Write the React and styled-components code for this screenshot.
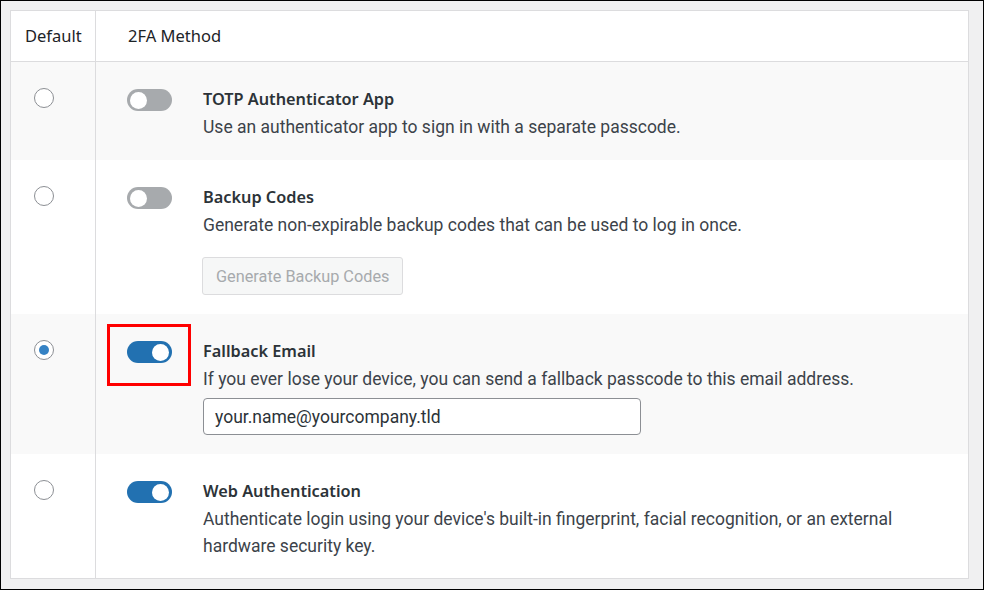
import React from "react";
import styled, { createGlobalStyle } from "styled-components";

const Global = createGlobalStyle`
  html, body { margin: 0; padding: 0; }
  body { background: #f0f0f1; }
  * { box-sizing: border-box; }
`;

const Frame = styled.div`
  width: 984px;
  height: 590px;
  border: 1px solid #000;
  background: #f0f0f1;
  padding: 9px 14px 11px 9px;
`;

const Table = styled.div`
  border: 1px solid #dcdcde;
  background: #fff;
  display: grid;
  grid-template-columns: 85px 1fr;
  height: 569px;
  align-content: start;
`;

const HeadCell = styled.div`
  height: 51px;
  display: flex;
  align-items: center;
  padding-left: ${(p) => p.$pl}px;
  padding-bottom: 1px;
  font-family: "Noto Sans", "Open Sans", sans-serif;
  font-size: 16.5px;
  color: #1d2327;
  border-bottom: 1px solid #dcdcde;
  border-right: ${(p) => (p.$divider ? "1px solid #dcdcde" : "none")};
`;

const Cell = styled.div`
  background: ${(p) => (p.$alt ? "#f9f9f9" : "#fff")};
  height: ${(p) => p.$h}px;
  border-right: ${(p) => (p.$divider ? "1px solid #dcdcde" : "none")};
`;

const RadioCell = styled(Cell)`
  display: flex;
  justify-content: flex-start;
  padding-top: 26px;
  padding-left: 23px;
`;

const Radio = styled.span`
  width: 20px;
  height: 20px;
  border-radius: 50%;
  border: 1px solid #8c8f94;
  background: #fff;
  display: flex;
  align-items: center;
  justify-content: center;
  &::after {
    content: "";
    width: 10px;
    height: 10px;
    border-radius: 50%;
    background: ${(p) => (p.$checked ? "#3582c4" : "transparent")};
  }
`;

const MethodCell = styled(Cell)`
  display: flex;
  padding-left: 31px;
  padding-top: 27px;
`;

const ToggleWrap = styled.div`
  width: 76px;
  flex: none;
  position: relative;
`;

const Highlight = styled.div`
  position: absolute;
  left: -20px;
  top: -17px;
  width: 84px;
  height: 62px;
  border: 3px solid #ff0000;
`;

const Toggle = styled.span`
  display: flex;
  align-items: center;
  width: 45px;
  height: 22px;
  border-radius: 11px;
  background: ${(p) => (p.$on ? "#2271b1" : "#a7aaad")};
  padding: 0 3px;
  justify-content: ${(p) => (p.$on ? "flex-end" : "flex-start")};
  &::after {
    content: "";
    width: 17px;
    height: 17px;
    border-radius: 50%;
    background: #fff;
  }
`;

const Body = styled.div`
  display: flex;
  flex-direction: column;
  align-items: flex-start;
`;

const Title = styled.div`
  font-family: "Noto Sans", "Open Sans", sans-serif;
  font-weight: 600;
  font-size: 16.3px;
  line-height: 22px;
  color: #2c3338;
  margin-top: -1px;
`;

const Desc = styled.div`
  font-family: Roboto, "Liberation Sans", sans-serif;
  font-size: 17.5px;
  line-height: 27px;
  color: #3c434a;
  margin-top: 4px;
  max-width: 700px;
`;

const Button = styled.button`
  margin-top: 18px;
  margin-left: -1px;
  height: 38px;
  padding: 0 13px;
  border: 1px solid #dcdcde;
  border-radius: 3px;
  background: #f6f7f7;
  color: #a7aaad;
  font-family: Roboto, "Liberation Sans", sans-serif;
  font-size: 16.3px;
`;

const Input = styled.div`
  margin-top: 5px;
  width: 438px;
  height: 37px;
  border: 1px solid #8c8f94;
  border-radius: 4px;
  background: #fff;
  display: flex;
  align-items: center;
  padding-left: 11px;
  font-family: Roboto, "Liberation Sans", sans-serif;
  font-size: 17.5px;
  color: #2c3338;
`;

const rows = [
  {
    h: 98,
    alt: true,
    on: false,
    title: "TOTP Authenticator App",
    desc: "Use an authenticator app to sign in with a separate passcode.",
  },
  {
    h: 154,
    alt: false,
    on: false,
    title: "Backup Codes",
    desc: "Generate non-expirable backup codes that can be used to log in once.",
    button: "Generate Backup Codes",
  },
  {
    h: 140,
    alt: true,
    on: true,
    checked: true,
    highlight: true,
    title: "Fallback Email",
    desc: "If you ever lose your device, you can send a fallback passcode to this email address.",
    input: "your.name@yourcompany.tld",
  },
  {
    h: 124,
    alt: false,
    on: true,
    title: "Web Authentication",
    desc: "Authenticate login using your device's built-in fingerprint, facial recognition, or an external hardware security key.",
  },
];

export default function App() {
  return (
    <>
      <Global />
      <Frame>
        <Table>
          <HeadCell $pl={14} $divider>Default</HeadCell>
          <HeadCell $pl={32}>2FA Method</HeadCell>
          {rows.map((r) => (
            <React.Fragment key={r.title}>
              <RadioCell $alt={r.alt} $h={r.h} $divider>
                <Radio $checked={r.checked} />
              </RadioCell>
              <MethodCell $alt={r.alt} $h={r.h}>
                <ToggleWrap>
                  {r.highlight && <Highlight />}
                  <Toggle $on={r.on} />
                </ToggleWrap>
                <Body>
                  <Title>{r.title}</Title>
                  <Desc>{r.desc}</Desc>
                  {r.button && <Button>{r.button}</Button>}
                  {r.input && <Input>{r.input}</Input>}
                </Body>
              </MethodCell>
            </React.Fragment>
          ))}
        </Table>
      </Frame>
    </>
  );
}
